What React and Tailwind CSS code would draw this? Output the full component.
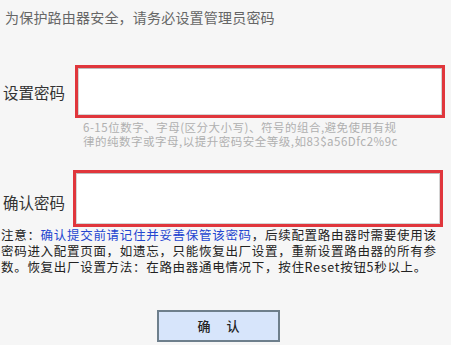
const cjk = { fontFamily: '"Noto Sans CJK SC", "Liberation Sans", sans-serif' };

const PasswordBox = ({ height }) => (
  <div className={`w-[370px] ${height} border-[3px] border-[#e0363c] bg-white`}>
    <div className="w-full h-full border border-[#d4d4d4] border-t-[#bdbdbd] bg-white" />
  </div>
);

export default function App() {
  return (
    <div className="w-[464px] h-[345px] bg-white overflow-hidden" style={cjk}>
      <div className="w-[451px] h-full bg-[#f6f6f6] flex flex-col">
        {/* title */}
        <p className="pt-[9px] pl-[5px] text-[14px] leading-[16px] text-[#666] tracking-[0.2px] whitespace-nowrap">
          为保护路由器安全，请务必设置管理员密码
        </p>

        {/* password */}
        <div className="mt-[40px] flex items-center">
          <span className="w-[75px] pl-[3px] pt-[3px] text-[15.5px] text-[#333] whitespace-nowrap">设置密码</span>
          <PasswordBox height="h-[53px]" />
        </div>
        <div className="ml-[83px] mt-[3px] flex flex-col text-[11.5px] leading-[13.5px] text-[#b0b0b0] tracking-[0.5px] whitespace-nowrap">
          <span>6-15位数字、字母(区分大小写)、符号的组合,避免使用有规</span>
          <span>律的纯数字或字母,以提升密码安全等级,如83$a56Dfc2%9c</span>
        </div>

        {/* confirm */}
        <div className="mt-[22px] flex items-center">
          <span className="w-[73px] pl-[3px] pt-[8px] text-[15.5px] text-[#333] whitespace-nowrap">确认密码</span>
          <PasswordBox height="h-[57px]" />
        </div>

        {/* notice */}
        <div className="mt-[0px] pl-[1px] flex flex-col text-[12.5px] leading-[16px] text-[#222] tracking-[0.7px] whitespace-nowrap">
          <span>
            注意：<span className="text-[#2446d0]">确认提交前请记住并妥善保管该密码</span>，后续配置路由器时需要使用该
          </span>
          <span>密码进入配置页面，如遗忘，只能恢复出厂设置，重新设置路由器的所有参</span>
          <span>数。恢复出厂设置方法：在路由器通电情况下，按住Reset按钮5秒以上。</span>
        </div>

        {/* submit */}
        <button className="mt-[35px] ml-[157px] w-[123px] h-[32px] bg-[#d7e5fb] border-2 border-[#6e7f8c] flex items-center justify-center gap-[16px] text-[13px] font-medium text-[#222]">
          <span>确</span>
          <span>认</span>
        </button>
      </div>
    </div>
  );
}
